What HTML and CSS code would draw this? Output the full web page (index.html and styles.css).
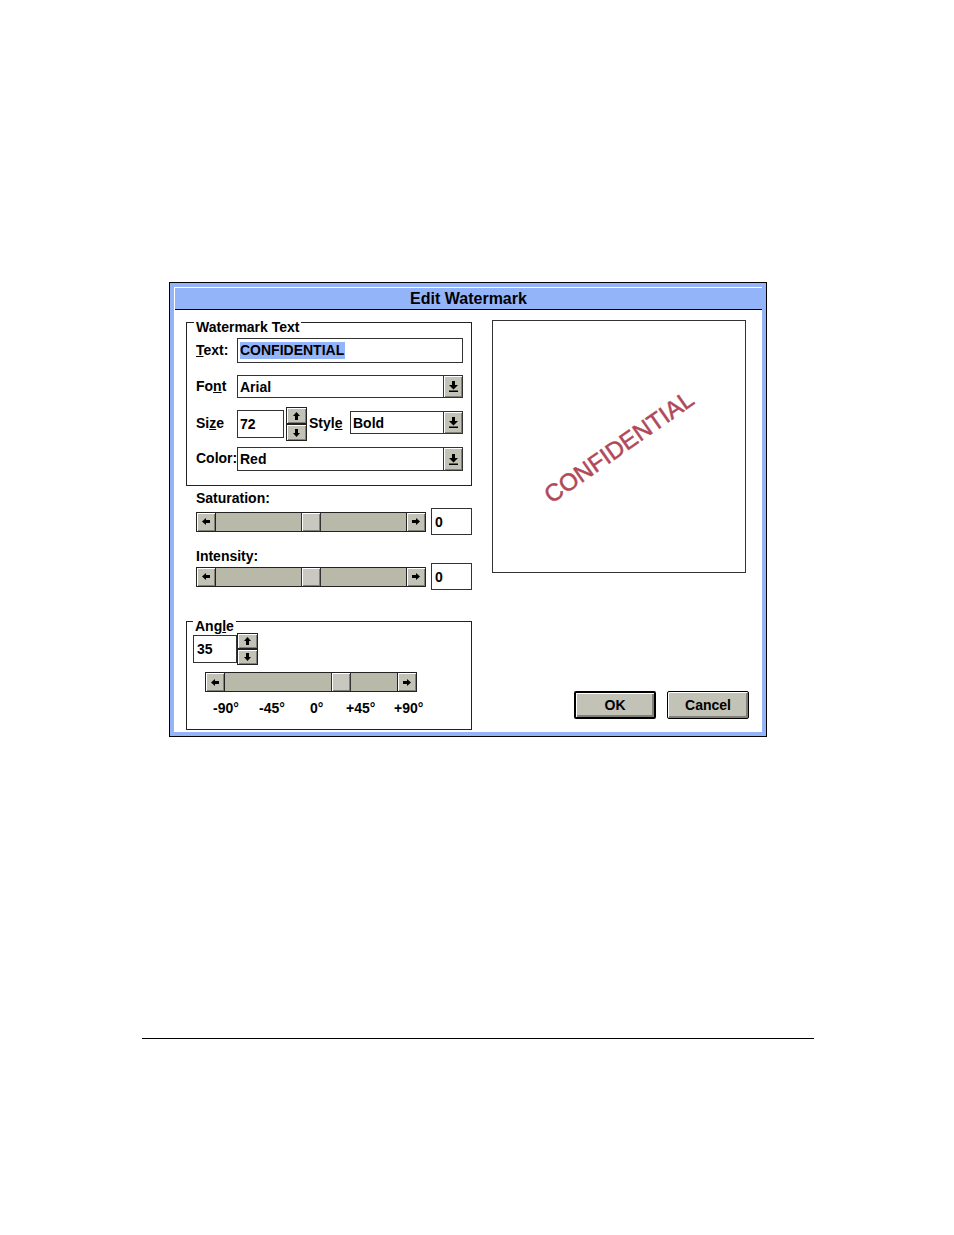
FILE: index.html
```html
<!DOCTYPE html>
<html>
<head>
<meta charset="utf-8">
<title>Edit Watermark</title>
<link rel="stylesheet" href="styles.css">
</head>
<body>
<div class="dialog">
  <div class="window">
    <div class="titlebar">Edit Watermark</div>
    <div class="client">
      <div class="leftcol">
        <div class="group group-text">
          <div class="legend">Watermark Text</div>
          <div class="row row-text">
            <span class="lbl"><u>T</u>ext:</span>
            <div class="edit wide"><span class="sel">CONFIDENTIAL</span></div>
          </div>
          <div class="row row-font">
            <span class="lbl">Fo<u>n</u>t</span>
            <div class="combo wide"><span class="val">Arial</span><span class="ddbtn"><svg width="9" height="11" viewBox="0 0 9 11"><path d="M3 0H6V4H9L4.5 8.5L0 4H3Z"/><rect y="9.5" width="9" height="1.5"/></svg></span></div>
          </div>
          <div class="row row-size">
            <span class="lbl">Si<u>z</u>e</span>
            <div class="edit size">72</div>
            <div class="spin">
              <span class="spbtn up"><svg width="7" height="8" viewBox="0 0 7 8"><path d="M3.5 0L7 4H5V8H2V4H0Z"/></svg></span>
              <span class="spbtn down"><svg width="7" height="8" viewBox="0 0 7 8"><path d="M2 0H5V4H7L3.5 8L0 4H2Z"/></svg></span>
            </div>
            <span class="lbl2">Styl<u>e</u></span>
            <div class="combo style"><span class="val">Bold</span><span class="ddbtn"><svg width="9" height="11" viewBox="0 0 9 11"><path d="M3 0H6V4H9L4.5 8.5L0 4H3Z"/><rect y="9.5" width="9" height="1.5"/></svg></span></div>
          </div>
          <div class="row row-color">
            <span class="lbl">Color:</span>
            <div class="combo wide"><span class="val">Red</span><span class="ddbtn"><svg width="9" height="11" viewBox="0 0 9 11"><path d="M3 0H6V4H9L4.5 8.5L0 4H3Z"/><rect y="9.5" width="9" height="1.5"/></svg></span></div>
          </div>
        </div>

        <div class="slabel first">Saturation:</div>
        <div class="srow">
          <div class="scroll">
            <span class="sbtn left"><svg width="8" height="7" viewBox="0 0 8 7"><path d="M0 3.5L4 0V2H8V5H4V7Z"/></svg></span>
            <span class="track"><span class="thumb"></span></span>
            <span class="sbtn right"><svg width="8" height="7" viewBox="0 0 8 7"><path d="M8 3.5L4 0V2H0V5H4V7Z"/></svg></span>
          </div>
          <div class="edit num">0</div>
        </div>

        <div class="slabel second">Intensity:</div>
        <div class="srow">
          <div class="scroll">
            <span class="sbtn left"><svg width="8" height="7" viewBox="0 0 8 7"><path d="M0 3.5L4 0V2H8V5H4V7Z"/></svg></span>
            <span class="track"><span class="thumb"></span></span>
            <span class="sbtn right"><svg width="8" height="7" viewBox="0 0 8 7"><path d="M8 3.5L4 0V2H0V5H4V7Z"/></svg></span>
          </div>
          <div class="edit num">0</div>
        </div>

        <div class="group group-angle">
          <div class="legend angle-legend">Ang<u>l</u>e</div>
          <div class="arow">
            <div class="edit angle">35</div>
            <div class="spin tall">
              <span class="spbtn up"><svg width="7" height="8" viewBox="0 0 7 8"><path d="M3.5 0L7 4H5V8H2V4H0Z"/></svg></span>
              <span class="spbtn down"><svg width="7" height="8" viewBox="0 0 7 8"><path d="M2 0H5V4H7L3.5 8L0 4H2Z"/></svg></span>
            </div>
          </div>
          <div class="scroll anglescroll">
            <span class="sbtn left"><svg width="8" height="7" viewBox="0 0 8 7"><path d="M0 3.5L4 0V2H8V5H4V7Z"/></svg></span>
            <span class="track atrack"><span class="thumb"></span></span>
            <span class="sbtn right"><svg width="8" height="7" viewBox="0 0 8 7"><path d="M8 3.5L4 0V2H0V5H4V7Z"/></svg></span>
          </div>
          <div class="ticks">
            <span class="t1">-90°</span><span class="t2">-45°</span><span class="t3">0°</span><span class="t4">+45°</span><span class="t5">+90°</span>
          </div>
        </div>
      </div>

      <div class="rightcol">
        <div class="preview"><span class="wm">CONFIDENTIAL</span></div>
        <div class="buttons">
          <button class="btn default">OK</button>
          <button class="btn">Cancel</button>
        </div>
      </div>
    </div>
  </div>
</div>
<div class="rule"></div>
</body>
</html>
```

FILE: styles.css
```css
* { box-sizing: border-box; }

body {
  margin: 0;
  background: #ffffff;
  font-family: "Liberation Sans", Arial, sans-serif;
  font-weight: bold;
  font-size: 14px;
  color: #000;
}

.dialog {
  margin: 282px 0 0 169px;
  width: 598px;
  height: 455px;
  border: 1px solid #000;
  padding: 4px 4px 4px 4px;
  background: #94b4fa;
}

.window {
  height: 100%;
  background: #fff;
  padding: 1px 0 0 1px;
  display: flex;
  flex-direction: column;
}

.titlebar {
  height: 22px;
  line-height: 21px;
  border-bottom: 1px solid #000;
  background: #94b4fa;
  text-align: center;
  font-size: 16px;
}

.client {
  flex: 1;
  display: flex;
  padding-left: 11px;
}

.leftcol {
  width: 286px;
  display: flex;
  flex-direction: column;
}

.group {
  border: 1px solid #222;
}

.group-text {
  margin-top: 12px;
  height: 164px;
  padding-left: 9px;
}

.legend {
  width: fit-content;
  margin-top: -3px;
  margin-left: -2px;
  padding: 0 2px;
  line-height: 14px;
  height: 14px;
  background: #fff;
}

.row {
  display: flex;
  align-items: center;
}

.lbl {
  width: 41px;
  flex: none;
  margin-top: -2px;
}

.row-text { margin-top: 4px; height: 25px; }
.row-font { margin-top: 12px; height: 23px; }
.row-size { margin-top: 9px; height: 34px; }
.row-color { margin-top: 6px; height: 24px; }

.edit {
  border: 1px solid #333;
  background: #fff;
  padding-left: 2px;
  display: flex;
  align-items: center;
  flex: none;
}

.wide { width: 226px; height: 100%; }

.sel {
  background: #94b4fa;
  line-height: 17px;
  padding: 0 1px 0 0;
}

.combo {
  border: 1px solid #333;
  background: #fff;
  display: flex;
  align-items: stretch;
  flex: none;
}

.combo .val {
  flex: 1;
  padding-left: 2px;
  display: flex;
  align-items: center;
}

.ddbtn {
  width: 19px;
  border-left: 1px solid #333;
  background: #c2c2b6;
  box-shadow: inset 1px 1px #fff, inset -1px -1px #808078;
  display: flex;
  align-items: center;
  justify-content: center;
}

.size { width: 47px; height: 28px; }

.spin {
  margin-left: 2px;
  width: 21px;
  height: 34px;
  border: 1px solid #222;
  display: flex;
  flex-direction: column;
  flex: none;
  background: #222;
  gap: 2px;
}

.spbtn {
  flex: 1;
  background: #c2c2b6;
  box-shadow: inset 1px 1px #fff, inset -1px -1px #808078;
  display: flex;
  align-items: center;
  justify-content: center;
}

.lbl2 {
  margin-left: 2px;
  width: 41px;
  flex: none;
  margin-top: -2px;
}

.style {
  width: 113px;
  height: 23px;
  align-self: flex-start;
  margin-top: 4px;
}
.row-color .combo { height: 24px; }

.slabel {
  padding-left: 10px;
  line-height: 14px;
  height: 14px;
}

.slabel.first { margin-top: 5px; }
.slabel.second { margin-top: 14px; }

.srow {
  margin-top: 0;
  padding-left: 10px;
  height: 27px;
  display: flex;
  align-items: center;
}

.slabel.first + .srow { margin-top: 3px; }

.scroll {
  width: 230px;
  height: 20px;
  border: 1px solid #222;
  display: flex;
  flex: none;
}

.sbtn {
  width: 19px;
  flex: none;
  background: #c2c2b6;
  box-shadow: inset 1px 1px #fff, inset -1px -1px #808078;
  display: flex;
  align-items: center;
  justify-content: center;
}

.sbtn.left { border-right: 1px solid #222; }
.sbtn.right { border-left: 1px solid #222; }

.track {
  flex: 1;
  background: #b9b9aa;
  display: flex;
  justify-content: center;
}

.thumb {
  width: 20px;
  border-left: 1px solid #333;
  border-right: 1px solid #333;
  background: #c8c8c0;
  box-shadow: inset 1px 1px #fff, inset -1px -1px #808078;
}

.num {
  margin-left: 5px;
  width: 41px;
  height: 27px;
  padding-left: 3px;
}

.group-angle {
  margin-top: 31px;
  height: 109px;
}

.angle-legend { margin-left: 6px; }

.arow {
  display: flex;
  align-items: center;
  height: 32px;
  padding-left: 6px;
}

.angle { width: 44px; height: 28px; padding-left: 3px; }

.spin.tall { margin-left: 0; height: 32px; }

.anglescroll {
  margin-top: 7px;
  margin-left: 18px;
  width: 212px;
}

.atrack { justify-content: flex-start; padding-left: 106px; }

.ticks {
  margin-top: 9px;
  padding-left: 26px;
  display: flex;
  line-height: 14px;
}

.ticks span { flex: none; }
.t1 { width: 46px; }
.t2 { width: 51px; }
.t3 { width: 36px; }
.t4 { width: 48px; }

.rightcol {
  margin-left: 20px;
  display: flex;
  flex-direction: column;
}

.preview {
  margin-top: 10px;
  width: 254px;
  height: 253px;
  border: 1px solid #333;
  display: flex;
  align-items: center;
  justify-content: center;
}

.wm {
  font-weight: normal;
  font-size: 24px;
  color: #b0485a;
  -webkit-text-stroke: 0.5px #b0485a;
  transform: rotate(-35deg);
  white-space: nowrap;
}

.buttons {
  margin-top: 118px;
  margin-left: 82px;
  display: flex;
  gap: 11px;
}

.btn {
  width: 82px;
  height: 28px;
  font-family: "Liberation Sans", Arial, sans-serif;
  font-weight: bold;
  font-size: 14px;
  color: #000;
  background: #c2c2b6;
  border: 1px solid #000;
  border-radius: 2px;
  box-shadow: inset 1px 1px #fff, inset -2px -2px #808078;
  padding: 0;
}

.btn.default {
  border-width: 2px;
}

.rule {
  margin: 301px 0 0 142px;
  width: 672px;
  height: 1px;
  background: #000;
}
```
